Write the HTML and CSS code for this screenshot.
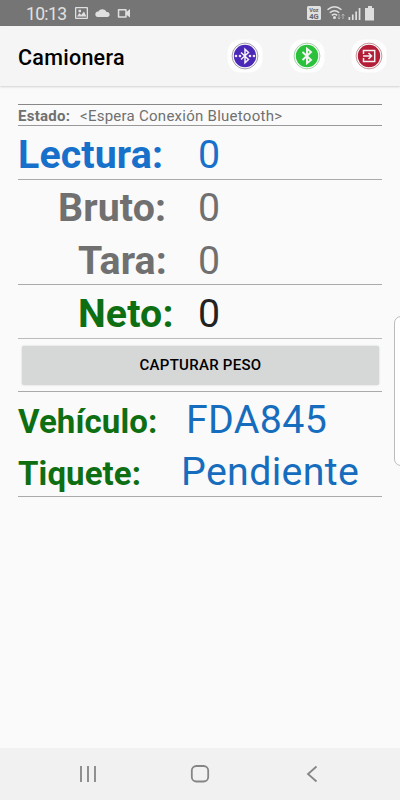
FILE: index.html
```html
<!DOCTYPE html>
<html lang="es">
<head>
<meta charset="utf-8">
<title>Camionera</title>
<link rel="stylesheet" href="styles.css">
</head>
<body>
<div class="screen">
  <div class="status">
    <span class="clock">10:13</span>
    <svg class="status-left" width="56" height="14" viewBox="0 0 56 14" fill="#e0e0e0">
      <path fill-rule="evenodd" d="M1 1h11q1 0 1 1v10q0 1-1 1H1q-1 0-1-1V2q0-1 1-1zM1.300 2.300v9.400h10.400V2.300zM2 10.500l2.300-3.500 1.900 2L9 5.500l2.300 5zM3.500 3.800h2.500v2.400H3.500z"/>
      <path d="M23 11a2.800 2.800 0 0 1 .3-5.600 4.700 4.700 0 0 1 8.300.7 2.500 2.500 0 0 1 1 4.900z"/>
      <path fill-rule="evenodd" d="M43.500 3h7.500q.7 0 .7.700v2L55 3v8.500L51.700 9v2q0 .700-.7.700h-7.500q-.7 0-.7-.7V3.700q0-.7.7-.7zM44.300 4.500v5.700h5.900V4.500z"/>
    </svg>
    <svg class="status-right" width="69" height="16" viewBox="0 0 69 16">
      <rect x="0" y="1" width="14" height="14" rx="1.500" fill="#e0e0e0"/>
      <text class="voz" x="7" y="6.500" text-anchor="middle">Voz</text>
      <text class="four" x="7" y="14" text-anchor="middle">4G</text>
      <g fill="none" stroke="#e0e0e0" stroke-width="1.500"><path d="M20.500 4.800q7-6 14 0M22.800 7.700q4.700-4 9.400 0M24.800 10.400q2.700-2.200 5.400 0"/></g>
      <circle cx="27.500" cy="12.500" r="1.500" fill="#e0e0e0"/>
      <path d="M32 9v5M30.600 12.500l1.400 1.600 1.400-1.600M36 14V9M34.600 10.600L36 9l1.400 1.600" fill="none" stroke="#b4b4b4" stroke-width="1"/>
      <path d="M41.500 12h1.700v3h-1.700zM44.900 9.500h1.700V15h-1.700zM48.300 6.500h1.700V15h-1.700zM51.700 3h1.700v12h-1.700z" fill="#e0e0e0"/>
      <path d="M61 1h4v2h2v12.500h-9V3h3z" fill="#dedede"/>
    </svg>
  </div>
  <header class="appbar">
    <h1>Camionera</h1>
    <div class="actions">
      <svg width="36" height="34" viewBox="-18 -17 36 34">
        <rect class="halo" x="-17.500" y="-16.500" width="35" height="33" rx="13"/>
        <circle r="12.900" fill="none" stroke="#8d8795" stroke-width=".8"/><circle r="11.200" fill="#4a28b8"/>
        <path class="glyph" d="M-4-3.500L3.500 3.500 0 6.800V-6.800L3.500-3.500-4 3.500"/>
        <g fill="#eee6ff"><circle cx="-9" r="1.300"/><circle cx="-5" r="1.300"/><circle cx="5" r="1.300"/><circle cx="9" r="1.300"/></g>
      </svg>
      <svg width="36" height="34" viewBox="-18 -17 36 34">
        <rect class="halo" x="-17.500" y="-16.500" width="35" height="33" rx="13"/>
        <circle r="12.900" fill="none" stroke="#8fc395" stroke-width=".8"/><circle r="11.200" fill="#2bc23b"/>
        <path class="glyph bold" d="M-4.500-4L4 4 0 7.300V-7.300L4-4-4.500 4"/>
      </svg>
      <svg width="36" height="34" viewBox="-18 -17 36 34">
        <rect class="halo" x="-17.500" y="-16.500" width="35" height="33" rx="13"/>
        <circle r="12.900" fill="none" stroke="#b37b82" stroke-width=".8"/><circle r="11.200" fill="#b31d36"/>
        <path class="glyph" d="M-5.500-2V-5.500H5.700V5.500H-5.500V2M-6 0H2.500M-.5-3L2.500 0-.5 3"/>
      </svg>
    </div>
  </header>
  <main class="content">
    <div class="row estado"><b>Estado:</b><span>&lt;Espera Conexión Bluetooth&gt;</span></div>
    <div class="row lectura"><b>Lectura:</b><span>0</span></div>
    <div class="row bruto"><b>Bruto:</b><span>0</span></div>
    <div class="row tara"><b>Tara:</b><span>0</span></div>
    <div class="row neto"><b>Neto:</b><span>0</span></div>
    <div class="button-row"><button>CAPTURAR PESO</button></div>
    <div class="row vehiculo"><b>Vehículo:</b><span>FDA845</span></div>
    <div class="row tiquete"><b>Tiquete:</b><span>Pendiente</span></div>
  </main>
  <nav class="navbar">
    <svg width="18" height="18" viewBox="0 0 18 18"><path d="M2 1v16M9 1v16M16 1v16"/></svg>
    <svg width="20" height="20" viewBox="0 0 20 20"><rect x="1.800" y="2" width="16.400" height="15.500" rx="4.500"/></svg>
    <svg width="18" height="18" viewBox="0 0 18 18"><path d="M13.500 1.500L5 9l8.500 7.500"/></svg>
  </nav>
  <div class="edge-handle"></div>
</div>
</body>
</html>
```
FILE: styles.css
```css
* { box-sizing: border-box; }
body { margin: 0; font-family: Roboto, "Liberation Sans", sans-serif; }
.screen {
  position: relative;
  display: flex;
  flex-direction: column;
  width: 400px;
  height: 800px;
  overflow: hidden;
  background: #fafafa;
}
.status {
  display: flex;
  align-items: center;
  height: 26px;
  padding: 0 24px 0 26px;
  background: #757575;
}
.clock { width: 49px; font-size: 17.500px; line-height: 26px; padding-top: 1px; color: #e0e0e0; letter-spacing: -.65px; }
.status-right { margin-left: auto; }
.voz { font-size: 5.500px; font-weight: 700; fill: #666; }
.four { font-size: 7.500px; font-weight: 700; fill: #666; }
.appbar {
  display: flex;
  align-items: center;
  justify-content: space-between;
  height: 60px;
  padding: 0 13px 0 18px;
  background: #f5f5f5;
  box-shadow: 0 1px 2px rgba(0, 0, 0, .16);
}
h1 { margin: 3px 0 0; font-size: 21.500px; font-weight: 500; letter-spacing: .27px; color: #000; }
.actions { display: flex; gap: 26px; }
.halo { fill: #fefefe; }
.glyph { fill: none; stroke: #f6f2f6; stroke-width: 1.500; }
.glyph.bold { stroke-width: 1.900; }
.content { flex: 1; padding: 18px 18px 0; }
.row { display: flex; align-items: baseline; white-space: nowrap; color: #707070; }
.row b { font-weight: 700; }
.estado { height: 22px; border-top: 1px solid #888; border-bottom: 1px solid #999; font-size: 15px; line-height: 22px; letter-spacing: .26px; }
.estado b { width: 62px; }
.lectura, .bruto, .tara, .neto { font-size: 39.300px; letter-spacing: .12px; }
.lectura b, .bruto b, .tara b, .neto b { width: 180px; }
.lectura { height: 54px; line-height: 58px; border-bottom: 1px solid #aaa; color: #1770ca; }
.bruto { height: 52px; line-height: 57px; }
.bruto b { padding-left: 40px; }
.tara { height: 53px; line-height: 58px; border-bottom: 1px solid #aaa; }
.tara b { padding-left: 60px; }
.neto { height: 54px; line-height: 58px; border-bottom: 1px solid #bbb; color: #222; }
.neto b { padding-left: 60px; color: #0e6e12; }
.button-row { height: 53px; padding: 7px 3px 0 4px; border-bottom: 1px solid #aaa; }
button {
  display: block;
  width: 100%;
  height: 39px;
  padding: 0;
  border: 0;
  border-radius: 2px;
  background: #d6d7d7;
  box-shadow: 0 0 2px rgba(0, 0, 0, .2);
  font: 500 15px/39px Roboto, sans-serif;
  letter-spacing: .28px;
  color: #000;
}
.vehiculo, .tiquete { font-size: 39.300px; letter-spacing: .35px; color: #176dbd; }
.vehiculo b, .tiquete b { font-size: 33px; letter-spacing: .1px; color: #0e6e12; }
.vehiculo { height: 52px; line-height: 57px; }
.vehiculo b { width: 168px; }
.tiquete { height: 53px; line-height: 57px; border-bottom: 1px solid #aaa; }
.tiquete b { width: 163px; }
.navbar {
  display: flex;
  align-items: center;
  justify-content: space-between;
  height: 52px;
  padding: 0 79px;
  background: #f1f1f1;
}
.navbar svg { fill: none; stroke: #858585; stroke-width: 1.800; }
.edge-handle {
  position: absolute;
  top: 316px;
  left: 394px;
  width: 14px;
  height: 150px;
  border: 1px solid #bbb;
  border-radius: 7px;
  background: #fff;
}
```
